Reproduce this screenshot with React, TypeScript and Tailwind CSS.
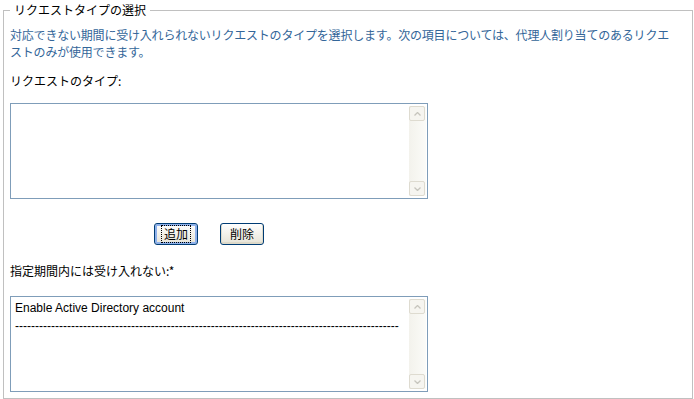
import React from 'react';

const jp = { fontFamily: '"Noto Sans CJK JP", "Liberation Sans", sans-serif' };

function ScrollArrow({ up }: { up?: boolean }) {
  return (
    <div className="h-[15px] w-[16px] rounded-[2px] border border-[#dedbd0] bg-[#f6f5f0] flex items-center justify-center">
      <svg width="7" height="4" viewBox="0 0 7 4">
        <path
          d={up ? 'M0.5 3.5 L3.5 0.5 L6.5 3.5' : 'M0.5 0.5 L3.5 3.5 L6.5 0.5'}
          fill="none"
          stroke="#c6c5bd"
          strokeWidth="1.3"
        />
      </svg>
    </div>
  );
}

function ListBox({ children }: { children?: React.ReactNode }) {
  return (
    <div className="w-[418px] h-[96px] border border-[#7f9db9] bg-white flex">
      <div className="flex-1 min-w-0 px-[4px] pt-[2px]">{children}</div>
      <div className="w-[17px] mr-[1px] my-[2px] flex flex-col justify-between bg-gradient-to-r from-[#f3f2ec] to-[#fbfbf8]">
        <ScrollArrow up />
        <ScrollArrow />
      </div>
    </div>
  );
}

function XpButton({ label, focused }: { label: string; focused?: boolean }) {
  return (
    <button
      className={
        'h-[22px] w-[44px] rounded-[3px] border border-[#003c74] bg-gradient-to-b from-white to-[#e6e3d6] text-[12px] leading-none text-black flex items-center justify-center ' +
        (focused ? 'shadow-[inset_0_0_0_2px_#8fb1ea]' : 'shadow-[inset_0_-1px_0_1px_#ddd9c9]')
      }
      style={jp}
    >
      <span className={focused ? 'outline outline-1 outline-dotted outline-black px-[2px] py-[2px]' : ''}>{label}</span>
    </button>
  );
}

export default function App() {
  const dashes = '-'.repeat(96);

  return (
    <div className="w-[694px] h-[399px] bg-white pt-[3px] pl-[3px] pr-[1px]" style={jp}>
      <fieldset className="h-[396px] border border-[#c0c0c0] pl-[6px] pr-[6px]">
        <legend className="px-[4px] text-[12px] leading-[14px] text-black">リクエストタイプの選択</legend>

        {/* description */}
        <p className="mt-[9px] text-[12px] leading-[17px] tracking-[-0.2px] text-[#336699] whitespace-nowrap">
          対応できない期間に受け入れられないリクエストのタイプを選択します。次の項目については、代理人割り当てのあるリクエ
          <br />
          ストのみが使用できます。
        </p>

        <p className="mt-[12px] text-[12px] leading-[17px] text-black">リクエストのタイプ:</p>

        <div className="mt-[14px]">
          <ListBox />
        </div>

        <div className="mt-[24px] flex gap-[22px] pl-[144px]">
          <XpButton label="追加" focused />
          <XpButton label="削除" />
        </div>

        <p className="mt-[17px] text-[12px] leading-[17px] text-black">指定期間内には受け入れない:*</p>

        <div className="mt-[17px]">
          <ListBox>
            <div
              className="text-[12px] leading-[18px] text-black whitespace-nowrap"
              style={{ fontFamily: '"Liberation Sans", sans-serif' }}
            >
              <div>Enable Active Directory account</div>
              <div>{dashes}</div>
            </div>
          </ListBox>
        </div>
      </fieldset>
    </div>
  );
}
